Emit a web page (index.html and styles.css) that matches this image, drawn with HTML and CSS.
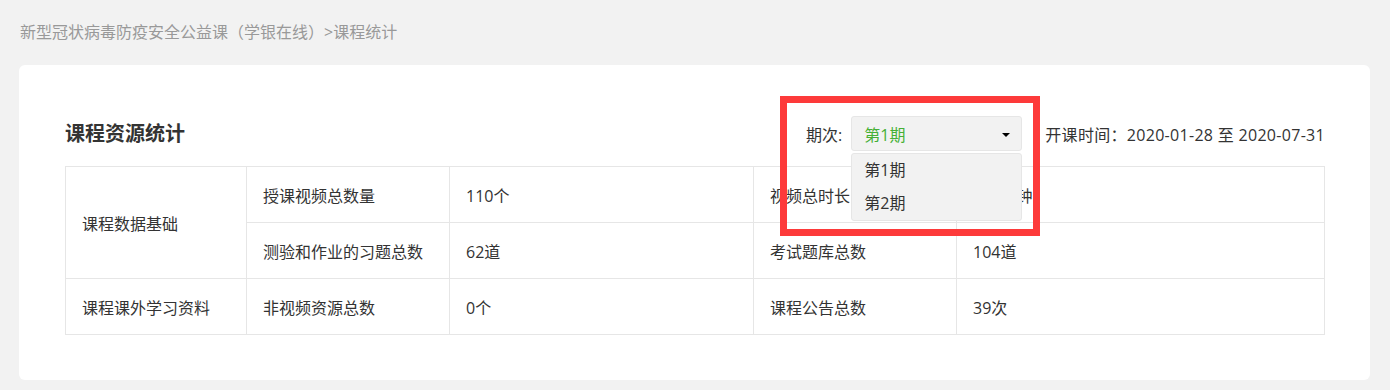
FILE: index.html
```html
<!DOCTYPE html>
<html lang="zh-CN">
<head>
<meta charset="utf-8">
<title>课程统计</title>
<link rel="stylesheet" href="styles.css">
</head>
<body>
<div class="crumb">新型冠状病毒防疫安全公益课（学银在线）&gt;课程统计</div>
<section class="card">
  <div class="head">
    <h2 class="title">课程资源统计</h2>
    <div class="tools">
      <div class="filter">
        <span class="flabel">期次:</span>
        <div class="select">
          <div class="sel-box">
            <span class="sel-val">第1期</span>
            <span class="caret"></span>
          </div>
          <ul class="options">
            <li>第1期</li>
            <li>第2期</li>
          </ul>
        </div>
        <div class="mark"></div>
      </div>
      <div class="date">开课时间：2020-01-28 至 2020-07-31</div>
    </div>
  </div>
  <div class="grid">
    <div class="cell span2">课程数据基础</div>
    <div class="cell">授课视频总数量</div>
    <div class="cell">110个</div>
    <div class="cell">视频总时长</div>
    <div class="cell">716分钟</div>
    <div class="cell">测验和作业的习题总数</div>
    <div class="cell">62道</div>
    <div class="cell">考试题库总数</div>
    <div class="cell">104道</div>
    <div class="cell">课程课外学习资料</div>
    <div class="cell">非视频资源总数</div>
    <div class="cell">0个</div>
    <div class="cell">课程公告总数</div>
    <div class="cell">39次</div>
  </div>
</section>
</body>
</html>
```

FILE: styles.css
```css
html, body {
  margin: 0;
  padding: 0;
}
body {
  background: #f2f2f2;
  font-family: "Open Sans", "Noto Sans CJK SC", "Microsoft YaHei", sans-serif;
  color: #333;
  padding: 21px 20px 0 19px;
}
.crumb {
  font-size: 16px;
  line-height: 22px;
  color: #999;
  padding-left: 1px;
}
.card {
  margin-top: 22px;
  background: #fff;
  border-radius: 6px;
  padding: 51px 45px 45px 46px;
}
.head {
  display: flex;
  justify-content: space-between;
  align-items: center;
  height: 35px;
}
.title {
  margin: 0;
  font-size: 20px;
  font-weight: bold;
  line-height: 35px;
  color: #333;
}
.tools {
  display: flex;
  align-items: center;
}
.filter {
  position: relative;
  display: flex;
  align-items: center;
  margin-right: 23px;
}
.flabel {
  font-size: 16px;
  margin-right: 9px;
}
.select {
  position: relative;
  width: 171px;
}
.sel-box {
  box-sizing: border-box;
  height: 35px;
  background: #f2f2f2;
  border: 1px solid #e6e6e6;
  border-radius: 3px;
  display: flex;
  align-items: center;
  justify-content: space-between;
  padding: 0 11px 0 12px;
}
.sel-val {
  color: #45b035;
  font-size: 16px;
}
.caret {
  width: 0;
  height: 0;
  border-left: 4px solid transparent;
  border-right: 4px solid transparent;
  border-top: 4px solid #000;
  margin-top: 2px;
}
.options {
  position: absolute;
  left: 0;
  top: 37px;
  width: 171px;
  box-sizing: border-box;
  margin: 0;
  padding: 0;
  list-style: none;
  background: #f2f2f2;
  border: 1px solid #e6e6e6;
  border-radius: 3px;
  z-index: 2;
}
.options li {
  height: 33px;
  line-height: 33px;
  padding-left: 12px;
  font-size: 16px;
  color: #333;
}
.mark {
  position: absolute;
  left: -26px;
  top: -20px;
  width: 260px;
  height: 140px;
  box-sizing: border-box;
  border: 7px solid #fd3a3a;
  z-index: 3;
  pointer-events: none;
}
.date {
  font-size: 16px;
  color: #333;
  letter-spacing: 0.3px;
}
.grid {
  margin-top: 15px;
  display: grid;
  grid-template-columns: 181px 203px 304px 203px 1fr;
  grid-auto-rows: 56px;
  border-left: 1px solid #e6e6e6;
  border-top: 1px solid #e6e6e6;
}
.cell {
  border-right: 1px solid #e6e6e6;
  border-bottom: 1px solid #e6e6e6;
  display: flex;
  align-items: center;
  padding-left: 16px;
  font-size: 16px;
  color: #333;
}
.span2 {
  grid-row: span 2;
}
```
